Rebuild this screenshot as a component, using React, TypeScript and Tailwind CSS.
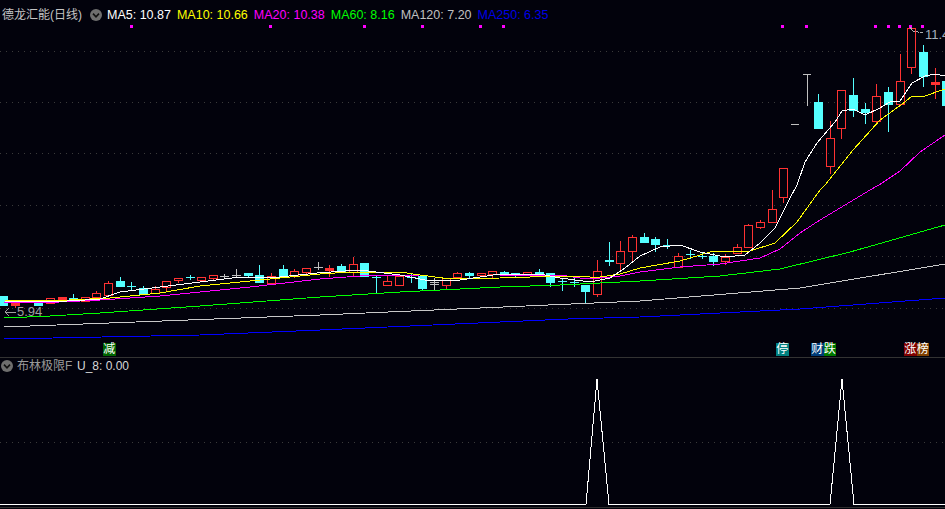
import React from 'react';

// x, kind, body top, body bottom, high, low
type Candle = [number, 'r' | 'R' | 'c' | 'C' | 'g', number, number, number, number];

const UP = '#ff3232';
const DOWN = '#54ffff';
const GRAY = '#c0c0c0';

const candles: Candle[] = [
  [0, 'c', 296, 305, 296, 305],
  [1, 'R', 303, 305, 303, 308],
  [3, 'c', 303, 305, 303, 306],
  [4, 'r', 298, 303, 298, 303],
  [5, 'R', 297, 299, 297, 301],
  [6, 'c', 298, 300, 294, 300],
  [7, 'r', 297, 301, 297, 302],
  [8, 'r', 293, 297, 291, 298],
  [9, 'r', 283, 295, 281, 295],
  [10, 'c', 281, 286, 277, 286],
  [11, 'C', 286, 286, 282, 291],
  [12, 'c', 288, 294, 286, 295],
  [13, 'r', 289, 293, 286, 294],
  [14, 'r', 281, 287, 281, 291],
  [15, 'r', 278, 280, 278, 283],
  [16, 'C', 277, 277, 275, 280],
  [17, 'r', 277, 280, 277, 281],
  [18, 'r', 275, 278, 275, 280],
  [19, 'g', 276, 276, 274, 278],
  [20, 'g', 275, 275, 269, 277],
  [21, 'c', 273, 275, 273, 278],
  [22, 'c', 275, 282, 265, 282],
  [23, 'r', 276, 283, 273, 284],
  [24, 'c', 269, 277, 265, 278],
  [25, 'r', 271, 276, 269, 278],
  [26, 'r', 268, 272, 268, 275],
  [27, 'g', 267, 267, 262, 270],
  [28, 'R', 268, 270, 265, 277],
  [29, 'c', 266, 272, 264, 272],
  [30, 'r', 264, 272, 257, 277],
  [31, 'c', 263, 276, 263, 276],
  [32, 'C', 277, 277, 276, 293],
  [33, 'r', 281, 285, 276, 285],
  [34, 'r', 276, 285, 276, 285],
  [35, 'C', 277, 277, 274, 283],
  [36, 'c', 276, 288, 276, 290],
  [37, 'g', 282, 284, 278, 291],
  [38, 'r', 278, 285, 278, 290],
  [39, 'r', 273, 277, 272, 277],
  [40, 'c', 273, 275, 272, 278],
  [41, 'r', 273, 275, 273, 275],
  [42, 'r', 271, 274, 271, 278],
  [43, 'c', 272, 274, 271, 275],
  [44, 'c', 273, 275, 273, 277],
  [45, 'r', 272, 275, 272, 275],
  [46, 'c', 272, 274, 269, 274],
  [47, 'c', 273, 282, 273, 287],
  [48, 'C', 281, 281, 279, 291],
  [49, 'C', 282, 282, 278, 287],
  [50, 'c', 285, 291, 285, 303],
  [51, 'r', 271, 294, 260, 297],
  [52, 'C', 260, 261, 242, 266],
  [53, 'r', 251, 263, 241, 272],
  [54, 'r', 237, 251, 235, 262],
  [55, 'c', 237, 242, 233, 242],
  [56, 'c', 239, 244, 237, 252],
  [57, 'C', 245, 245, 239, 249],
  [58, 'r', 256, 267, 253, 267],
  [59, 'C', 254, 254, 250, 259],
  [60, 'C', 256, 256, 252, 259],
  [61, 'c', 256, 261, 253, 266],
  [62, 'r', 257, 261, 254, 265],
  [63, 'r', 247, 253, 244, 253],
  [64, 'r', 225, 247, 224, 247],
  [65, 'r', 222, 227, 220, 229],
  [66, 'r', 209, 222, 190, 222],
  [67, 'r', 168, 197, 168, 203],
  [70, 'c', 102, 128, 94, 128],
  [71, 'r', 138, 166, 121, 174],
  [72, 'r', 90, 128, 90, 139],
  [73, 'c', 95, 110, 78, 117],
  [74, 'c', 109, 112, 103, 124],
  [75, 'r', 96, 121, 84, 125],
  [76, 'c', 92, 104, 87, 132],
  [77, 'r', 81, 104, 54, 104],
  [78, 'r', 28, 67, 28, 74],
  [79, 'c', 52, 76, 45, 87],
  [80, 'R', 82, 84, 68, 99],
  [81, 'c', 81, 105, 81, 105],
];

const ma5 = '4,301 50,302 85,300 100,299 120,292 160,287 200,282 240,277 280,277 317,273 360,270 376,272 400,275 430,281 460,280 480,277 500,274 540,274 560,278 590,282 610,278 625,268 640,256 660,247 680,245 700,252 725,257 745,255 760,243 775,228 790,198 797,185 805,162 817,143 835,122 842,111 853,109 865,115 880,108 890,102 900,101 912,83 925,76 935,74 945,76';
const ma10 = '4,300 50,301 110,298 130,296 160,293 200,286 250,281 290,277 320,274 350,272 400,272 420,275 450,279 500,278 560,276 590,277 600,277 620,274 640,268 680,261 710,252 750,251 775,243 797,222 820,190 825,185 853,150 880,120 905,102 912,96 925,96 945,89';
const ma20 = '4,303 60,302 100,300 160,296 200,292 250,287 320,279 360,276 420,275 500,275 560,275 580,278 600,278 620,276 640,272 680,267 720,264 760,258 780,249 800,233 820,220 870,190 879,185 900,171 920,152 945,135';
const ma60 = '4,318 50,316 100,313 200,306 320,297 400,292 500,287 560,285 600,283 640,281 720,276 780,269 850,252 945,225';
const ma120 = '4,327 320,315 640,301 800,288 945,264';
const ma250 = '4,339 200,335 320,330 568,319 640,317 800,309 945,298';

const lines: [string, string][] = [
  [ma250, '#0000ff'],
  [ma120, '#c8c8c8'],
  [ma60, '#00ff00'],
  [ma20, '#ff00ff'],
  [ma10, '#ffff00'],
  [ma5, '#ffffff'],
];

const signalDots = [131, 270, 364, 422, 480, 503, 782, 806, 875, 888, 899, 910, 922];
const gridTop = [51, 102, 153, 205, 256, 308];

const maLegend = [
  { label: 'MA5: 10.87', cls: 'text-white' },
  { label: 'MA10: 10.66', cls: 'text-[#ffff00]' },
  { label: 'MA20: 10.38', cls: 'text-[#ff00ff]' },
  { label: 'MA60: 8.16', cls: 'text-[#00ff00]' },
  { label: 'MA120: 7.20', cls: 'text-[#c0c0c0]' },
  { label: 'MA250: 6.35', cls: 'text-[#0000e6]' },
];

const CandleMark = ({ c }: { c: Candle }) => {
  const [k, kind, top, bottom, high, low] = c;
  const x = Math.floor(3.8 + 11.64 * k);
  if (kind === 'r') {
    // hollow body, wick only outside of it
    return (
      <g fill={UP}>
        <rect x={x - 4} y={top} width={9} height={1} />
        <rect x={x - 4} y={bottom} width={9} height={1} />
        <rect x={x - 4} y={top} width={1} height={bottom - top + 1} />
        <rect x={x + 4} y={top} width={1} height={bottom - top + 1} />
        {high < top && <rect x={x} y={high} width={1} height={top - high} />}
        {low > bottom && <rect x={x} y={bottom} width={1} height={low - bottom} />}
      </g>
    );
  }
  if (kind === 'g') {
    return (
      <g fill={GRAY}>
        <rect x={x} y={high} width={1} height={low - high} />
        <rect x={x - 4} y={top} width={9} height={1} />
        <rect x={x - 4} y={bottom} width={9} height={1} />
      </g>
    );
  }
  const color = kind === 'R' ? UP : DOWN;
  return (
    <g fill={color}>
      <rect x={x} y={high} width={1} height={low - high} />
      <rect x={x - 4} y={top} width={9} height={bottom - top + 1} />
    </g>
  );
};

const Chevron = () => (
  <svg width="12" height="12" viewBox="0 0 12 12" className="shrink-0">
    <circle cx="6" cy="6" r="6" fill="#6e6e6e" />
    <path d="M3 4.6 L6 7.8 L9 4.6" fill="none" stroke="#101010" strokeWidth="1.6" />
  </svg>
);

const Tag = ({ text, cls }: { text: string; cls: string }) => (
  <span className={`w-[12.5px] h-[13px] flex items-center justify-center text-[12px] leading-[13px] text-white ${cls}`}>
    {text}
  </span>
);

const App = () => {
  return (
    <div className="w-[945px] h-[509px] flex flex-col overflow-hidden bg-[#02020c] font-['Liberation_Sans','Noto_Sans_CJK_SC',sans-serif]">
      {/* K line panel */}
      <div className="relative h-[358px] border-b border-[#333333]">
        <svg width="945" height="357" className="absolute inset-0" shapeRendering="crispEdges">
          {gridTop.map((y) => (
            <line key={y} x1="0" x2="945" y1={y + 0.5} y2={y + 0.5} stroke="#3a3a3a" strokeDasharray="1 5" />
          ))}
          {signalDots.map((x) => (
            <rect key={x} x={x - 1} y={25} width={3} height={3} fill="#ff00ff" />
          ))}
          {candles.map((c) => (
            <CandleMark key={c[0]} c={c} />
          ))}
          {/* the two gray doji at the gap */}
          <rect x={791} y={124} width={8} height={1} fill={GRAY} />
          <rect x={803} y={74} width={8} height={1} fill={GRAY} />
          <rect x={807} y={74} width={1} height={32} fill={GRAY} />
          {lines.map(([pts, color]) => (
            <polyline key={color} points={pts} fill="none" stroke={color} strokeWidth="1" />
          ))}
          {/* price leaders */}
          <polyline points="910,27 913,31 923,33" fill="none" stroke="#b0b0b0" strokeWidth="1" strokeDasharray="3 1" />
          <path d="M16 312 L5 312 M9 308 L5 312 L9 316" fill="none" stroke="#a0a0a0" strokeWidth="1" />
        </svg>

        <div className="relative flex items-center h-[30px] text-[12px] leading-[16px]">
          <span className="ml-[2px] w-[88px] text-[#c4c4c4] whitespace-nowrap">德龙汇能(日线)</span>
          <span className="mr-[5px]">
            <Chevron />
          </span>
          <div className="flex gap-[6px] text-[12.5px] whitespace-nowrap">
            {maLegend.map((m) => (
              <span key={m.label} className={m.cls}>
                {m.label}
              </span>
            ))}
          </div>
        </div>

        <span className="absolute left-[925px] top-[27px] text-[13px] leading-[16px] text-[#a8b0bc]">11.4</span>
        <span className="absolute left-[17px] top-[304px] text-[13px] leading-[16px] text-[#a0a0a0]">5.94</span>

        <div className="absolute left-[103px] top-[343px]">
          <Tag text="减" cls="bg-[#006400]" />
        </div>
        <div className="absolute left-[776px] top-[343px]">
          <Tag text="停" cls="bg-[#008080]" />
        </div>
        <div className="absolute left-[811px] top-[343px] flex">
          <Tag text="财" cls="bg-[#003c78]" />
          <Tag text="跌" cls="bg-[#007800]" />
        </div>
        <div className="absolute left-[904px] top-[343px] flex">
          <Tag text="涨" cls="bg-[#800000]" />
          <Tag text="榜" cls="bg-[#804000]" />
        </div>
      </div>

      {/* indicator panel */}
      <div className="relative flex-1">
        <svg width="945" height="151" className="absolute inset-0" shapeRendering="crispEdges">
          <line x1="0" x2="945" y1="84.5" y2="84.5" stroke="#3a3a3a" strokeDasharray="1 5" />
          <polyline
            points="0,146.5 586,146.5 597,21 609,146.5 830,146.5 842,21 854,146.5 945,146.5"
            fill="none"
            stroke="#ffffff"
            strokeWidth="1"
          />
          <line x1="0" x2="945" y1="149.5" y2="149.5" stroke="#2e2e2e" />
        </svg>
        <div className="relative flex items-center h-[16px] pl-[1px] text-[12px] leading-[16px] whitespace-nowrap">
          <Chevron />
          <span className="ml-[4px] w-[60px] text-[#9a9a9a]">布林极限F</span>
          <span className="text-[#d8d8d8]">U_8: 0.00</span>
        </div>
      </div>
    </div>
  );
};

export default App;
